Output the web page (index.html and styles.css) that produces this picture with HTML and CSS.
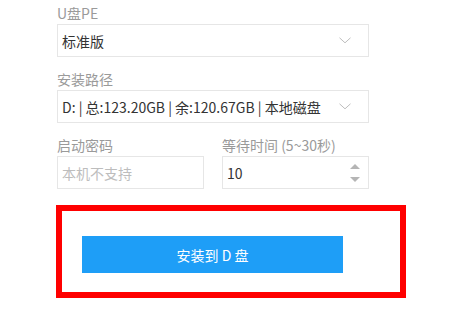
FILE: index.html
```html
<!DOCTYPE html>
<html lang="zh-CN">
<head>
<meta charset="utf-8">
<link rel="stylesheet" href="styles.css">
</head>
<body>
<div class="form">
  <div class="field">
    <div class="label">U盘PE</div>
    <div class="select">
      <span class="value">标准版</span>
      <svg class="chevron" width="12" height="7" viewBox="0 0 12 7"><path d="M0.5 0.8 L6 5.8 L11.5 0.8" fill="none" stroke="#bdbdbd" stroke-width="1"/></svg>
    </div>
  </div>
  <div class="field">
    <div class="label">安装路径</div>
    <div class="select">
      <span class="value">D: | 总:123.20GB | 余:120.67GB | 本地磁盘</span>
      <svg class="chevron" width="12" height="7" viewBox="0 0 12 7"><path d="M0.5 0.8 L6 5.8 L11.5 0.8" fill="none" stroke="#bdbdbd" stroke-width="1"/></svg>
    </div>
  </div>
  <div class="row">
    <div class="field half">
      <div class="label">启动密码</div>
      <div class="input disabled">本机不支持</div>
    </div>
    <div class="field half">
      <div class="label">等待时间 (5~30秒)</div>
      <div class="input number">
        <span class="value">10</span>
        <span class="spin">
          <svg width="10" height="18" viewBox="0 0 10 18"><path d="M0 5 L5 0 L10 5 Z" fill="#b5b5b5"/><path d="M0 13 L10 13 L5 18 Z" fill="#b5b5b5"/></svg>
        </span>
      </div>
    </div>
  </div>
  <div class="highlight">
    <button class="install">安装到 D 盘</button>
  </div>
</div>
</body>
</html>
```
FILE: styles.css
```css
html, body {
  margin: 0;
  padding: 0;
  background: #ffffff;
}
body {
  font-family: "Noto Sans CJK SC", "Noto Sans", sans-serif;
  font-size: 14px;
  color: #333333;
}
.form {
  width: 312px;
  margin-left: 57px;
  padding-top: 3px;
  display: flex;
  flex-direction: column;
  gap: 12px;
}
.field {
  display: flex;
  flex-direction: column;
}
.label {
  color: #9a9a9a;
  font-size: 14px;
  line-height: 20px;
  height: 20px;
  margin-bottom: 1px;
}
.select, .input {
  box-sizing: border-box;
  height: 33px;
  border: 1px solid #e6e6e6;
  display: flex;
  align-items: center;
  padding-left: 4px;
  line-height: 20px;
  white-space: nowrap;
}
.select {
  justify-content: space-between;
  padding-right: 17px;
}
.row {
  display: flex;
  gap: 18px;
}
.half {
  flex: 1;
}
.row .half:first-child {
  flex: 0 0 147px;
}
.input.disabled {
  color: #bdbdbd;
}
.input.number {
  justify-content: space-between;
  padding-right: 8px;
}
.spin svg {
  display: block;
}
.highlight {
  margin-top: 4px;
  margin-left: -1px;
  width: 350px;
  height: 93px;
  box-sizing: border-box;
  border: 6px solid #ff0000;
  padding: 25px 0 0 20px;
}
.install {
  display: block;
  width: 261px;
  height: 37px;
  border: none;
  background: #1e9ef7;
  color: #ffffff;
  font-family: "Noto Sans CJK SC", "Noto Sans", sans-serif;
  font-size: 14px;
  padding: 0;
  margin: 0;
}
```
